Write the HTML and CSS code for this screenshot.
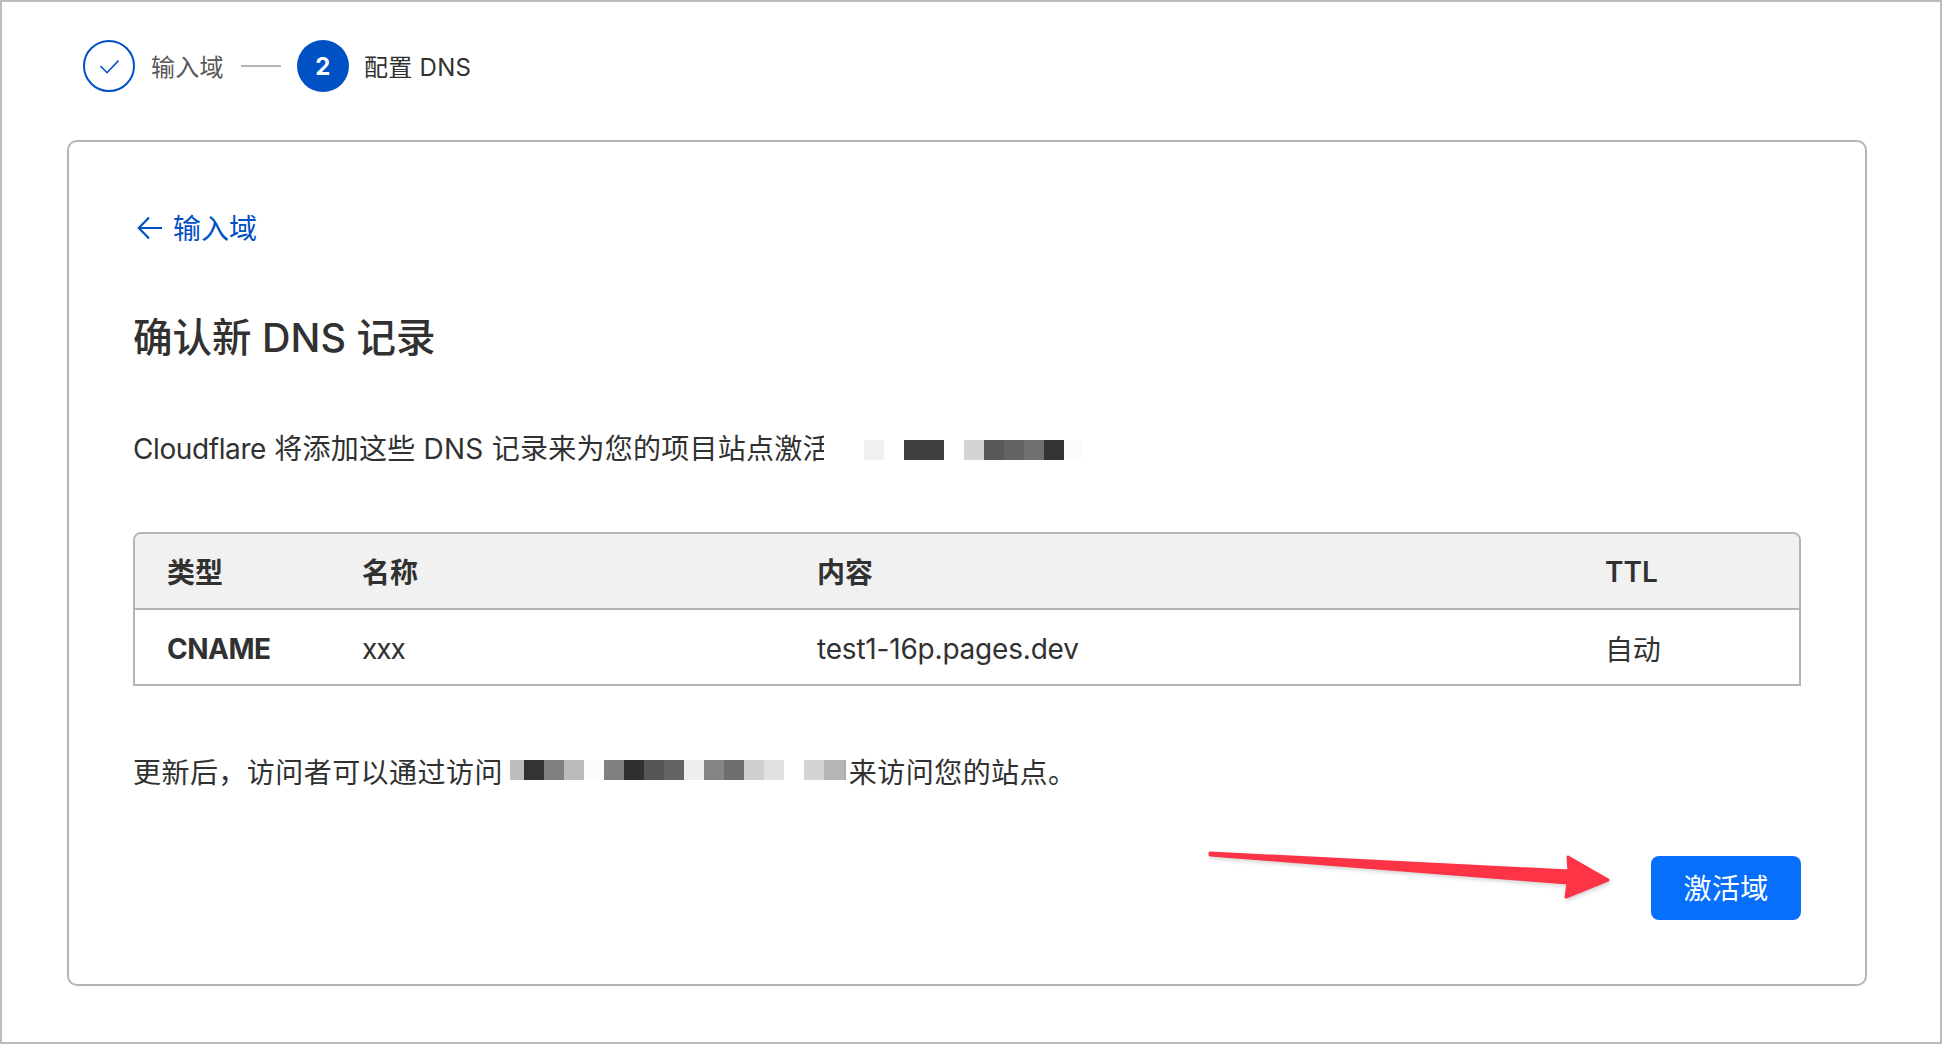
FILE: index.html
```html
<!DOCTYPE html>
<html lang="zh-CN">
<head>
<meta charset="utf-8">
<title>配置 DNS</title>
<link rel="stylesheet" href="styles.css">
</head>
<body>
<main class="frame">
  <ol class="steps">
    <li class="step step-done">
      <span class="step-dot step-dot-done">
        <svg class="check" width="20" height="15" viewBox="0 0 20 15" aria-hidden="true"><path d="M1.5 7 L8 13.7 L19.5 1.5" fill="none" stroke="currentColor" stroke-width="1.6"/></svg>
      </span>
      <span class="step-label">输入域</span>
    </li>
    <li class="step-line"></li>
    <li class="step step-current">
      <span class="step-dot step-dot-current">2</span>
      <span class="step-label">配置 DNS</span>
    </li>
  </ol>

  <section class="card">
    <a class="back" href="#">
      <svg class="back-icon" width="26" height="24" viewBox="0 0 26 24" aria-hidden="true"><path d="M25 12 H2 M12 1.5 L1.8 12 L12 22.5" fill="none" stroke="currentColor" stroke-width="2.2"/></svg>
      <span>输入域</span>
    </a>
    <h1 class="title">确认新 DNS 记录</h1>
    <div class="lead">
      <span class="lead-text"><span class="latin">Cloudflare</span> 将添加这些 DNS 记录来为您的项目站点激活</span>
      <span class="mosaic mosaic-a"></span>
    </div>
    <table class="records">
      <colgroup>
        <col class="col-type"><col class="col-name"><col class="col-content"><col>
      </colgroup>
      <thead>
        <tr><th>类型</th><th>名称</th><th>内容</th><th class="ttl">TTL</th></tr>
      </thead>
      <tbody>
        <tr><td class="strong">CNAME</td><td class="tight">xxx</td><td>test1-16p.pages.dev</td><td class="ttl-value">自动</td></tr>
      </tbody>
    </table>
    <div class="after">
      <span class="cjk-wide">更新后，访问者可以通过访问</span>
      <span class="mosaic mosaic-b"></span>
      <span class="cjk-wide">来访问您的站点。</span>
    </div>
    <div class="actions">
      <svg class="pointer" width="420" height="64" viewBox="0 0 420 64" aria-hidden="true">
        <path d="M4 3 L363 21 L362 7 L402 30 L360 47 L362 33 L4 5 Z" fill="#fc3445" stroke="#fc3445" stroke-width="3" stroke-linejoin="round"/>
      </svg>
      <button class="activate" type="button">激活域</button>
    </div>
  </section>
</main>
</body>
</html>
```
FILE: styles.css
```css
* { box-sizing: border-box; }
html, body { margin: 0; padding: 0; background: #fff; }
body {
  font-family: Inter, "Noto Sans CJK SC", sans-serif;
  color: #313131;
}
.frame {
  width: 1942px;
  height: 1044px;
  border: 2px solid #bcbcbc;
  padding: 38px 73px 0 65px;
  overflow: hidden;
}
.steps {
  list-style: none;
  margin: 0 0 48px 16px;
  padding: 0;
  display: flex;
  align-items: center;
  height: 52px;
  font-size: 24px;
}
.step { display: flex; align-items: center; gap: 16px; }
.step-label { padding-bottom: 2px; letter-spacing: .3px; }
.step-current .step-label { margin-left: -1px; }
.step-done { color: #595959; }
.step-current { color: #313131; }
.step-dot {
  width: 52px;
  height: 52px;
  border-radius: 50%;
  display: flex;
  align-items: center;
  justify-content: center;
  font-weight: 700;
  font-size: 24px;
}
.step-dot-done { border: 2px solid #0051c3; color: #0051c3; }
.step-dot-current { background: #0051c3; color: #fff; }
.step-line { width: 40px; height: 2px; background: #b6b6b6; margin: 0 16px 0 17px; }
.card {
  width: 1800px;
  height: 846px;
  border: 2px solid #b5b5b5;
  border-radius: 10px;
  padding: 65px 64px 0 64px;
}
.back {
  display: flex;
  align-items: center;
  gap: 10px;
  height: 40px;
  margin-left: 4px;
  color: #0051c3;
  font-size: 28px;
  text-decoration: none;
}
.back-icon { margin-top: 2px; }
.title {
  margin: 67px 0 0;
  font-size: 39.5px;
  line-height: 48px;
  font-weight: 500;
  color: #313131;
}
.lead {
  display: flex;
  align-items: center;
  margin-top: 63px;
  height: 44px;
  font-size: 28px;
}
.lead-text { width: 691px; overflow: hidden; white-space: nowrap; flex: none; letter-spacing: .25px; }
.latin { letter-spacing: -.4px; }
.cjk-wide { letter-spacing: .45px; padding-top: 2px; }
.mosaic { display: block; height: 20px; flex: none; }
.mosaic-a {
  width: 218px;
  margin: 6px 0 0 40px;
  background: linear-gradient(90deg,
    #f1f1f1 0 20px, #fff 20px 40px, #3f3f3f 40px 80px, #fff 80px 100px,
    #d4d4d4 100px 120px, #585858 120px 140px, #636363 140px 160px,
    #707070 160px 180px, #333 180px 200px, #fcfcfc 200px 218px);
}
.mosaic-b {
  width: 336px;
  margin: 0 3px 0 7px;
  background: linear-gradient(90deg,
    #bdbdbd 0 14px, #333 14px 34px, #7f7f7f 34px 54px, #bbb 54px 74px,
    #fcfcfc 74px 94px, #808080 94px 114px, #303030 114px 134px,
    #555 134px 154px, #636363 154px 174px, #eee 174px 194px,
    #858585 194px 214px, #6f6f6f 214px 234px, #cfcfcf 234px 254px,
    #e0e0e0 254px 274px, #fff 274px 294px, #d4d4d4 294px 314px,
    #b6b6b6 314px 334px, #aaa 334px 336px);
}
.records {
  width: 1668px;
  margin-top: 63px;
  border-collapse: separate;
  border-spacing: 0;
  table-layout: fixed;
  border: 2px solid #b5b5b5;
  border-radius: 8px 8px 0 0;
  font-size: 28px;
}
.col-type { width: 194px; }
.col-name { width: 455px; }
.col-content { width: 789px; }
.records th, .records td {
  text-align: left;
  padding: 0 0 0 33px;
  color: #313131;
}
.records th:first-child, .records td:first-child { padding-left: 32px; }
.records th {
  height: 76px;
  background: #f1f1f1;
  font-weight: 600;
  border-bottom: 2px solid #b5b5b5;
}
.records th:first-child { border-top-left-radius: 6px; }
.records th:last-child { border-top-right-radius: 6px; }
.records th.ttl { padding: 2px 0 0 32px; }
.records td { height: 74px; padding-top: 4px; font-weight: 400; letter-spacing: -.2px; }
.records td.strong { font-weight: 700; letter-spacing: -.5px; }
.records td.tight { letter-spacing: -1px; }
.records td.ttl-value { padding: 2px 0 0 32px; }
.after {
  display: flex;
  align-items: center;
  margin-top: 62px;
  height: 44px;
  font-size: 28px;
  white-space: nowrap;
}
.actions {
  position: relative;
  display: flex;
  justify-content: flex-end;
  margin-top: 64px;
  width: 1668px;
}
.pointer {
  position: absolute;
  left: 1073px;
  top: -6px;
  overflow: visible;
  filter: drop-shadow(1px 2px 2px rgba(0, 0, 0, .18));
}
.activate {
  width: 150px;
  height: 64px;
  border: 0;
  border-radius: 8px;
  padding: 0 0 2px;
  background: #086ffc;
  color: #fff;
  font: 400 28px Inter, "Noto Sans CJK SC", sans-serif;
  letter-spacing: .4px;
}
```
